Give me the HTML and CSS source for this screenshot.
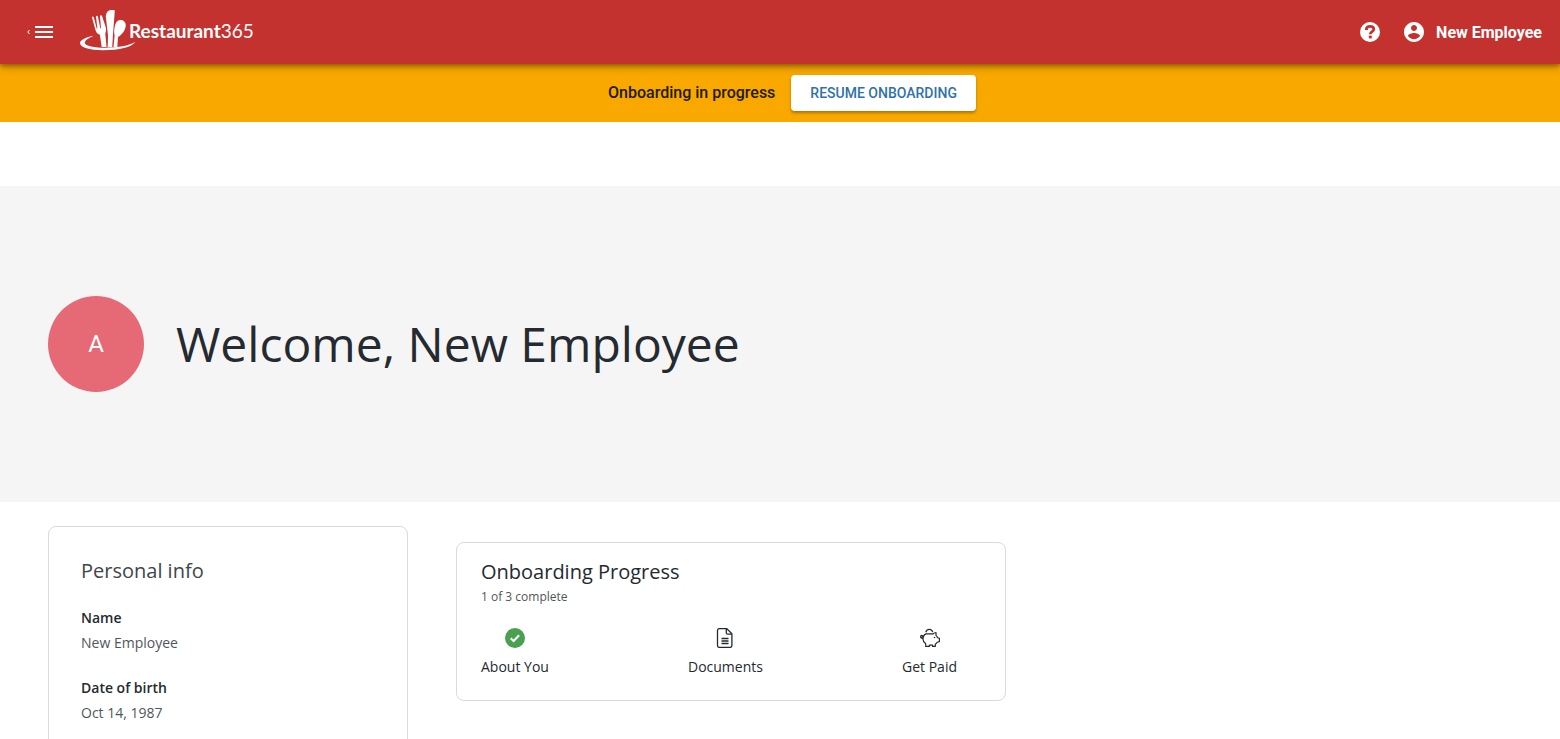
FILE: index.html
```
<!DOCTYPE html>
<html lang="en">
<head>
<meta charset="UTF-8">
<meta name="viewport" content="width=device-width, initial-scale=1.0">
<title>Restaurant365</title>
<link rel="stylesheet" href="styles.css">
</head>
<body>

<header class="topbar">
    <button type="button" class="menu-btn" aria-label="Open menu">
        <svg width="26" height="24" viewBox="0 0 26 24" aria-hidden="true">
            <path d="M2.5 10L0.8 12l1.7 2" fill="none" stroke="#fff" stroke-width="1"/>
            <path d="M8 6h18v2H8zM8 11h18v2H8zM8 16h18v2H8z" fill="#fff"/>
        </svg>
    </button>

    <a href="#" class="logo">
        <svg width="56" height="42" viewBox="0 0 56 42" fill="#fff" aria-hidden="true">
            <!-- fork -->
            <path d="M12 8.500c.2-1.200 1.500-1.200 1.800-.2l2.900 11.200h.7L16 7.700c.1-1.300 1.600-1.300 1.900-.2l2.400 11.700h.7L20 7.300c.1-1.300 1.700-1.400 2-.2l3.700 11c.7 2.600.3 4.600-.4 6.400L26.500 38h-4.800l-1.800-12.200c-2.500-.9-3.900-2.600-4.400-4.800z"/>
            <!-- knife -->
            <path d="M25.800 7.500C26.300 3 28.300 1 31.500 1c1.700 0 3.100.1 3.300.7L33 25.500l-.8 12.700h-4.500L28 26.500z"/>
            <!-- spoon -->
            <path d="M35.500 15c1-3.200 3.200-4.300 5.700-4 3.400.5 4.900 3.300 4.500 6.200-.6 4.300-3.800 8.600-7.700 10.800L37.300 38h-3.800l1.100-11.500c-1-3.400-.3-8.300.9-11.500z"/>
            <!-- plate -->
            <path d="M13.500 26.700C6.500 28.200 0 30.700 0 34c0 4.300 9.500 7.200 23 7.200 16.500 0 28.500-2.700 32.500-8.400-6.500 4-17.500 5.900-30 5.900-11 0-20.500-1.700-20.700-5 0-2.500 3.700-4.500 8.700-7z"/>
        </svg>
        <span class="logo-text">Restaurant<span class="logo-number">365</span></span>
    </a>

    <div class="account">
        <button type="button" class="icon-btn" aria-label="Help">
            <svg width="24" height="24" viewBox="0 0 24 24" aria-hidden="true">
                <circle cx="12" cy="12" r="10" fill="#fff"/>
                <path d="M8.300 9.900C8.300 7.500 9.800 6.300 12.100 6.300c2.300 0 3.700 1.200 3.700 3 0 2.400-3.500 2.300-3.500 4.900" fill="none" stroke="#c43230" stroke-width="2.800"/>
                <path d="M10.800 15.600h3v2.800h-3z" fill="#c43230"/>
            </svg>
        </button>
        <button type="button" class="user-btn">
            <svg width="24" height="24" viewBox="0 0 24 24" fill="#fff" aria-hidden="true">
                <path d="M12 2C6.480 2 2 6.480 2 12s4.480 10 10 10 10-4.480 10-10S17.520 2 12 2zm0 3c1.660 0 3 1.340 3 3s-1.340 3-3 3-3-1.340-3-3 1.340-3 3-3zm0 14.200c-2.500 0-4.710-1.280-6-3.220.03-1.990 4-3.080 6-3.080 1.990 0 5.970 1.090 6 3.080-1.290 1.940-3.500 3.220-6 3.220z"/>
            </svg>
            <span>New Employee</span>
        </button>
    </div>
</header>

<div class="onboarding-bar">
    <span>Onboarding in progress</span>
    <button type="button" class="resume-btn">RESUME ONBOARDING</button>
</div>

<main>
    <section class="welcome">
        <div class="avatar">A</div>
        <h1>Welcome, New Employee</h1>
    </section>

    <div class="cards">
        <section class="card personal-info">
            <h2>Personal info</h2>
            <dl>
                <dt>Name</dt>
                <dd>New Employee</dd>
                <dt>Date of birth</dt>
                <dd>Oct 14, 1987</dd>
            </dl>
        </section>

        <section class="card progress">
            <h2>Onboarding Progress</h2>
            <p class="progress-count">1 of 3 complete</p>
            <ul class="steps">
                <li>
                    <svg width="20" height="20" viewBox="0 0 20 20" aria-hidden="true">
                        <circle cx="10" cy="10" r="10" fill="#4b9f50"/>
                        <path d="M5.700 10.200l2.900 2.800 5.500-5.700" fill="none" stroke="#fff" stroke-width="2"/>
                    </svg>
                    <span>About You</span>
                </li>
                <li>
                    <svg width="20" height="20" viewBox="0 0 20 20" fill="none" stroke="#242a30" stroke-width="1.300" aria-hidden="true">
                        <path d="M4.500.6h7.200l5.200 5.200v11.600c0 1.200-.8 2-2 2H4.500c-1.200 0-2-.8-2-2V2.600c0-1.200.8-2 2-2z"/>
                        <path d="M11.300.8v3.900c0 1 .5 1.500 1.500 1.500h4M6.500 10.500h7M6.500 13h7M6.500 15.500h7"/>
                    </svg>
                    <span>Documents</span>
                </li>
                <li>
                    <svg width="20" height="20" viewBox="0 0 20 20" fill="none" stroke="#242a30" stroke-width="1.200" stroke-linejoin="round" aria-hidden="true">
                        <path d="M6 5.900h7.200c.7-.9 1.600-1.400 2.800-1.400v2.900c.8.700 1.300 1.400 1.600 2.300l1.800.6v3.300l-2.200.7c-.5.800-1.100 1.500-1.900 2v2.100h-2.700v-1.200H9.300v1.200H5.700v-2.700C4 14.500 3 13 3 11.200c0-3 1.300-4.700 3-5.300z"/>
                        <path d="M5.800 4.300C6.500 2.300 7.700 1.400 9.300 1.400s2.800.9 3.500 2.700M3.200 10.300C1.500 10.500.6 9.800.6 8.700c0-.8.500-1.300 1.200-1.300.6 0 .9.400.9.900 0 .7-.7 1.100-1.600 1"/>
                        <circle cx="14.500" cy="9.500" r=".8" fill="#242a30" stroke="none"/>
                    </svg>
                    <span>Get Paid</span>
                </li>
            </ul>
        </section>
    </div>
</main>

</body>
</html>
```
FILE: styles.css
```
* {
    box-sizing: border-box;
}

body {
    margin: 0;
    background-color: #fff;
    color: #242a30;
    font-family: "Open Sans", sans-serif;
    font-size: 14px;
    line-height: 20px;
}

h1, h2, p, dl, dd, ul {
    margin: 0;
    padding: 0;
}

button {
    border: none;
    background: none;
    padding: 0;
    font-family: Roboto, sans-serif;
    cursor: pointer;
}

svg {
    display: block;
    flex-shrink: 0;
}

.topbar {
    position: relative;
    display: flex;
    align-items: center;
    height: 64px;
    padding: 0 18px 0 27px;
    background-color: #c43230;
    color: #fff;
    box-shadow: 0 2px 4px rgba(0, 0, 0, 0.3), 0 4px 8px rgba(0, 0, 0, 0.2);
}

.logo {
    display: flex;
    align-items: center;
    margin-left: 27px;
    padding-bottom: 4px;
    color: #fff;
    text-decoration: none;
}

.logo-text {
    margin-left: -7px;
    padding-top: 2px;
    font-family: Lato, sans-serif;
    font-size: 19px;
    font-weight: 700;
    line-height: 24px;
}

.logo-number {
    font-weight: 400;
}

.account {
    display: flex;
    align-items: center;
    gap: 20px;
    margin-left: auto;
}

.user-btn {
    display: flex;
    align-items: center;
    gap: 10px;
    color: #fff;
    font-size: 16px;
    font-weight: 700;
}

.onboarding-bar {
    display: flex;
    align-items: center;
    justify-content: center;
    gap: 16px;
    height: 58px;
    padding-left: 24px;
    background-color: #f9a800;
    color: #211a0a;
    font-family: Roboto, sans-serif;
    font-size: 16px;
    font-weight: 500;
}

.resume-btn {
    height: 36px;
    padding: 0 19px;
    border-radius: 4px;
    background-color: #fff;
    color: #2f72a8;
    font-size: 14px;
    font-weight: 500;
    box-shadow: 0 2px 3px rgba(0, 0, 0, 0.3);
}

.welcome {
    display: flex;
    align-items: center;
    gap: 32px;
    height: 316px;
    margin-top: 64px;
    padding: 0 48px;
    background-color: #f5f5f5;
}

.avatar {
    display: flex;
    align-items: center;
    justify-content: center;
    width: 96px;
    height: 96px;
    border-radius: 50%;
    background-color: #e66a75;
    color: #fff;
    font-family: Roboto, sans-serif;
    font-size: 24px;
}

h1 {
    font-size: 48px;
    font-weight: 400;
    line-height: 56px;
}

h2 {
    font-size: 20px;
    font-weight: 400;
    line-height: 24px;
}

.cards {
    display: flex;
    align-items: flex-start;
    gap: 48px;
    padding: 24px 48px;
}

.card {
    border: 1px solid #d9dadb;
    border-radius: 8px;
}

.personal-info {
    flex: 0 1 360px;
    padding: 32px;
}

.personal-info h2 {
    color: #40464c;
}

dt {
    margin-top: 25px;
    font-weight: 600;
}

dd {
    margin-top: 5px;
    color: #50565c;
}

.progress {
    flex: 0 1 550px;
    margin-top: 16px;
    padding: 17px 24px 23px;
}

.progress-count {
    margin-top: 5px;
    color: #50565c;
    font-size: 12px;
    line-height: 16px;
}

.steps {
    display: flex;
    justify-content: space-between;
    margin-top: 23px;
    padding-right: 24px;
    list-style: none;
}

.steps li {
    display: flex;
    flex-direction: column;
    align-items: center;
    gap: 9px;
}
```
